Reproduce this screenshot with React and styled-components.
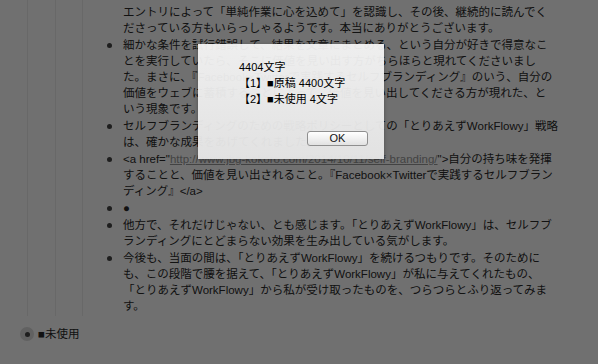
import React from "react";
import styled, { createGlobalStyle } from "styled-components";

const GlobalStyle = createGlobalStyle`
  html, body {
    margin: 0;
    padding: 0;
  }
  body {
    width: 598px;
    height: 364px;
    overflow: hidden;
    background: #fff;
    font-family: "Liberation Sans", "Noto Sans CJK JP", sans-serif;
  }
`;

const notes = [
  {
    hidden: true,
    lines: [
      "エントリによって「単純作業に心を込めて」を認識し、その後、継続的に読んでく",
      "ださっている方もいらっしゃるようです。本当にありがとうございます。",
    ],
  },
  {
    lines: [
      "細かな条件を試行錯誤して、結果を文章にまとめる、という自分が好きで得意なこ",
      "とを実行していたら、そこに価値を見い出す方がちらほらと現れてくださいまし",
      "た。まさに、『Facebook×Twitterで実践するセルフブランディング』のいう、自分の",
      "価値をウェブに蓄積することによって、価値を見い出してくださる方が現れた、と",
      "いう現象です。",
    ],
  },
  {
    lines: [
      "セルフブランディングのための戦略ポリシーとしての「とりあえずWorkFlowy」戦略",
      "は、確かな成果をあげてくれました。",
    ],
  },
  { link: true },
  { lines: ["●"] },
  {
    lines: [
      "他方で、それだけじゃない、とも感じます。「とりあえずWorkFlowy」は、セルフブ",
      "ランディングにとどまらない効果を生み出している気がします。",
    ],
  },
  {
    lines: [
      "今後も、当面の間は、「とりあえずWorkFlowy」を続けるつもりです。そのために",
      "も、この段階で腰を据えて、「とりあえずWorkFlowy」が私に与えてくれたもの、",
      "「とりあえずWorkFlowy」から私が受け取ったものを、つらつらとふり返ってみま",
      "す。",
    ],
  },
];

export default function App() {
  return (
    <>
      <GlobalStyle />
      <Page>
        <Branch $offset={27}>
          <Branch $offset={27}>
            <Branch $offset={26}>
              <List>
                {notes.map((note, i) => (
                  <Item key={i}>
                    <Bullet>{!note.hidden && <Dot />}</Bullet>
                    <Text>
                      {note.link ? (
                        <>
                          <Line>
                            {'<a href="'}
                            <Url>http://www.jbg-kokoro.com/2014/10/11/self-branding/</Url>
                            {'">自分の持ち味を発揮'}
                          </Line>
                          <Line>することと、価値を見い出されること。『Facebook×Twitterで実践するセルフブラン</Line>
                          <Line>{"ディング』</a>"}</Line>
                        </>
                      ) : (
                        note.lines.map((l, j) => <Line key={j}>{l}</Line>)
                      )}
                    </Text>
                  </Item>
                ))}
              </List>
            </Branch>
          </Branch>
        </Branch>

        <RootItem>
          <RootBullet>
            <Halo>
              <Dot />
            </Halo>
          </RootBullet>
          <Text>
            <Line>■未使用</Line>
          </Text>
        </RootItem>

        <Overlay>
          <Dialog>
            <Message>
              <Line>4404文字</Line>
              <Line>【1】■原稿 4400文字</Line>
              <Line>【2】■未使用 4文字</Line>
            </Message>
            <Actions>
              <OkButton>OK</OkButton>
            </Actions>
          </Dialog>
        </Overlay>
      </Page>
    </>
  );
}

const Page = styled.div`
  position: relative;
  width: 598px;
  height: 364px;
  overflow: hidden;
  background: #fff;
  color: #2a2a2a;
  font-size: 11.5px;
  line-height: 16px;
`;

const Branch = styled.div`
  margin-left: ${(p) => p.$offset}px;
  border-left: 1px solid #ececec;
`;

const List = styled.div`
  display: flex;
  flex-direction: column;
  gap: 1px;
  padding: 4px 0 2px;
`;

const Item = styled.div`
  display: flex;
`;

const Bullet = styled.div`
  width: 40px;
  flex: none;
  display: flex;
  justify-content: flex-end;
  padding-right: 11px;
  box-sizing: border-box;
  padding-top: 6px;
`;

const Dot = styled.span`
  display: block;
  width: 5px;
  height: 5px;
  border-radius: 50%;
  background: #444;
`;

const Text = styled.div`
  display: flex;
  flex-direction: column;
`;

const Line = styled.div`
  white-space: nowrap;
  text-align: left;
`;

const Url = styled.span`
  color: #999;
  text-decoration: underline;
`;

const RootItem = styled.div`
  display: flex;
  align-items: center;
  margin-top: 10px;
`;

const RootBullet = styled.div`
  width: 38px;
  flex: none;
  display: flex;
  padding-left: 20px;
  box-sizing: border-box;
`;

const Halo = styled.span`
  width: 14px;
  height: 14px;
  border-radius: 50%;
  background: #dcdcdc;
  display: flex;
  align-items: center;
  justify-content: center;
`;

const Overlay = styled.div`
  position: absolute;
  inset: 0;
  background: rgba(0, 0, 0, 0.56);
  display: flex;
  align-items: flex-start;
  padding: 44px 0 0 198px;
  box-sizing: border-box;
`;

const Dialog = styled.div`
  width: 186px;
  height: 115px;
  box-sizing: border-box;
  background: linear-gradient(rgba(248, 248, 248, 0.93), rgba(232, 232, 232, 0.95));
  box-shadow: 0 1px 4px rgba(0, 0, 0, 0.3);
  display: flex;
  flex-direction: column;
  justify-content: space-between;
  padding: 15px 16px 13px 41px;
  color: #000;
  font-size: 11px;
  line-height: 16px;
`;

const Message = styled.div`
  display: flex;
  flex-direction: column;
  align-items: flex-start;
`;

const Actions = styled.div`
  display: flex;
  justify-content: flex-end;
`;

const OkButton = styled.button`
  width: 61px;
  height: 15px;
  padding: 0;
  border: 1px solid #8f8f8f;
  border-radius: 3px;
  background: linear-gradient(#ffffff, #e2e2e2);
  font-family: "Liberation Sans", "Noto Sans CJK JP", sans-serif;
  font-size: 11px;
  line-height: 13px;
  color: #111;
`;
